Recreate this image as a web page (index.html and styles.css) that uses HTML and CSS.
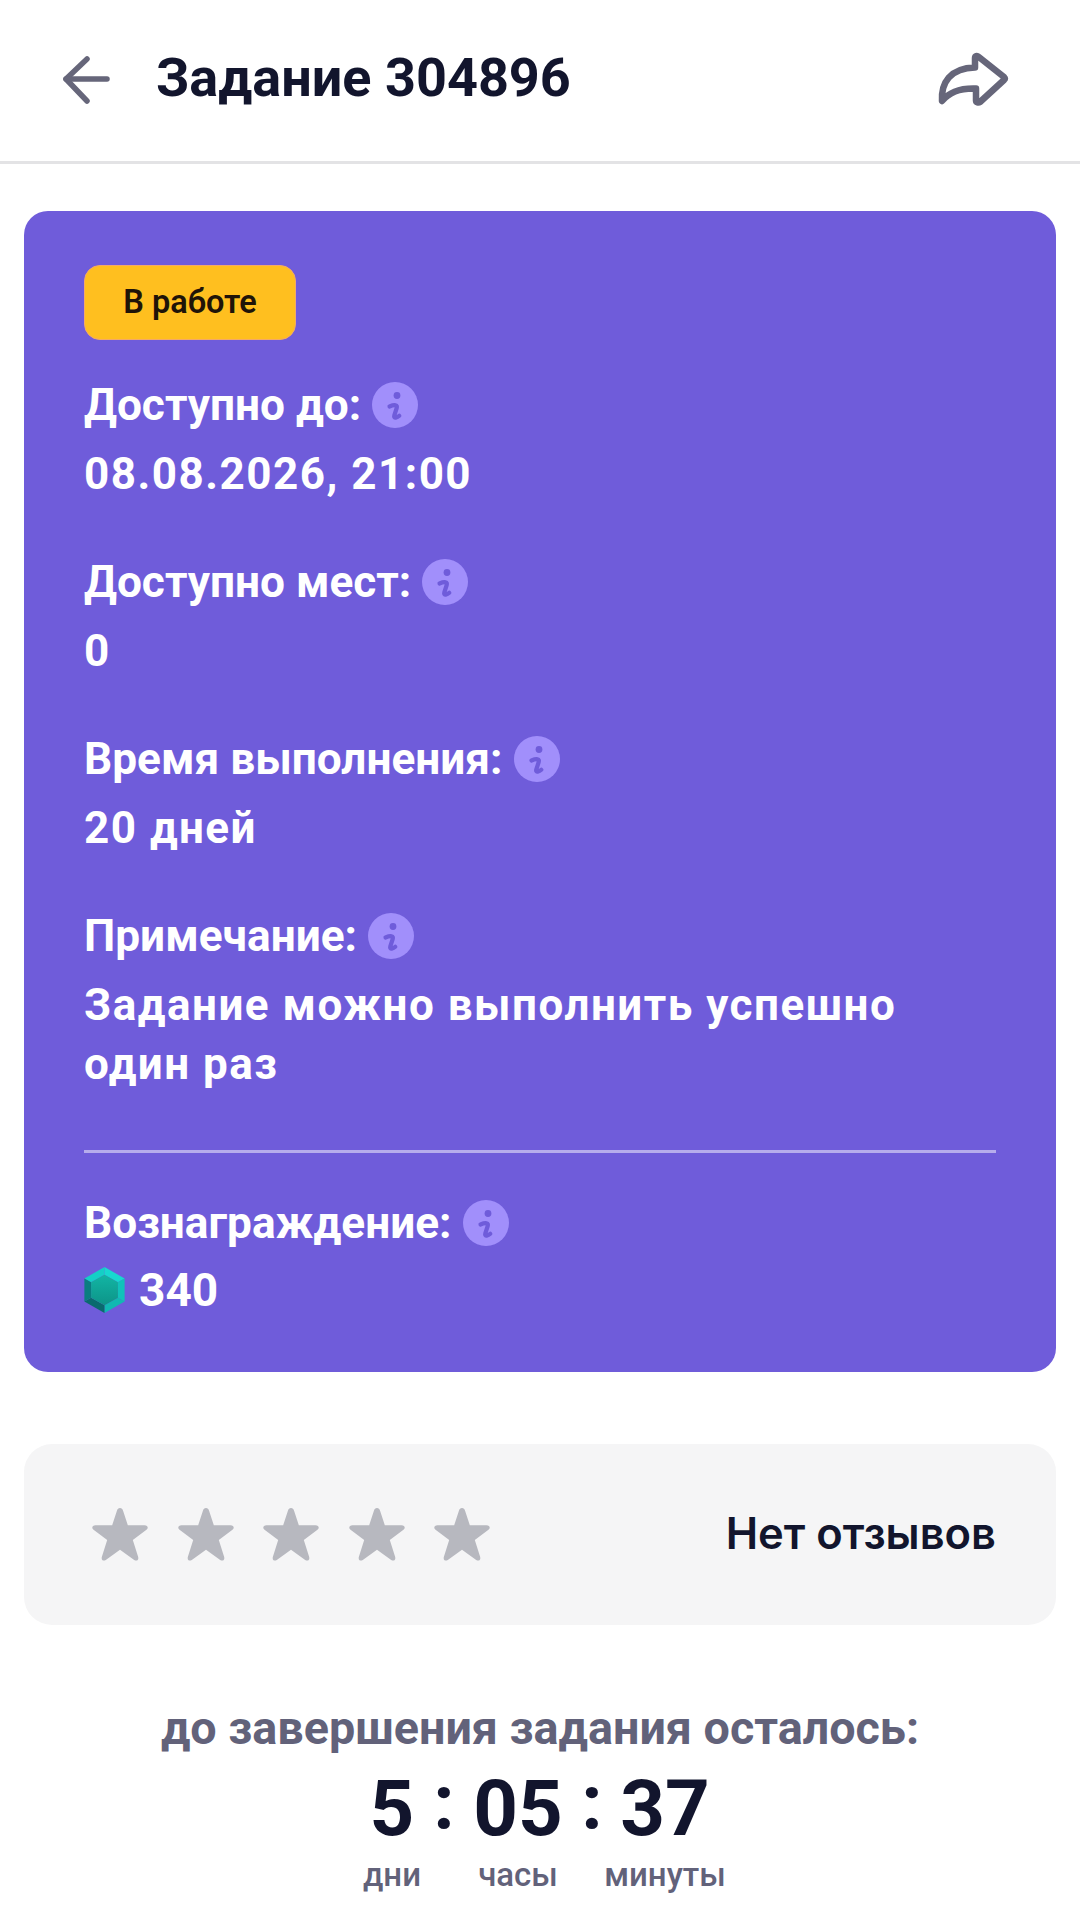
FILE: index.html
```html
<!DOCTYPE html>
<html lang="ru">
  <head>
    <meta charset="UTF-8" />
    <meta name="viewport" content="width=device-width, initial-scale=1.0" />
    <title>Задание 304896</title>
    <link rel="stylesheet" href="styles.css">
  </head>
  <body>
    <svg class="defs" width="0" height="0">
      <symbol id="info" viewBox="0 0 46 46">
        <circle cx="23" cy="23" r="23" fill="#a18ffb" />
        <circle cx="25" cy="13.500" r="3.400" fill="#6f5cda" />
        <path d="M17.500 24.500c2-.8 4.500-1.500 6-1.200 1.500.3 1.600 1.300 1.200 2.700l-2.400 7.500c-.5 1.600.3 2.300 1.500 2.100 1.200-.2 2.500-.9 3.500-1.800" fill="none" stroke="#6f5cda" stroke-width="4.200" stroke-linecap="round" stroke-linejoin="round" />
      </symbol>
      <symbol id="star" viewBox="3 3 52 51">
        <path d="M29 3c1.500 0 2.400 1 2.900 2.500l4.500 13.700h15.800c3 0 4 2.600 1.800 4.300l-12.900 9.700 5 15.900c.9 2.900-1.300 4.500-3.700 2.900L29 42.500 15.600 52c-2.400 1.600-4.600 0-3.700-2.900l5-15.900-12.900-9.700c-2.200-1.700-1.200-4.300 1.800-4.300h15.800l4.500-13.700C26.600 4 27.500 3 29 3z" fill="#b7b8bf" />
      </symbol>
      <linearGradient id="gem-core" x1="0" y1="0" x2="0" y2="1">
        <stop offset="0" stop-color="#12b5a4" />
        <stop offset="1" stop-color="#0d9488" />
      </linearGradient>
    </svg>

    <header class="topbar">
      <svg class="back-icon" viewBox="0 0 75 70" fill="none" stroke="#66667a" stroke-width="5.500" stroke-linecap="round" stroke-linejoin="round">
        <path d="M37 13 16 33l21 22" />
        <path d="M16 33h41" />
      </svg>
      <h1>Задание 304896</h1>
      <svg class="share-icon" viewBox="0 0 90 75" fill="none" stroke="#66667a" stroke-width="6.500" stroke-linecap="round" stroke-linejoin="round">
        <path d="M12 60C11 42 20 27 45 26.500V17c0-2 2-2.500 3.500-1.200L74 36c1 1 1 2 0 3L50 61c-1.500 1-4 .5-4-1.500V47.500C33 47 20 50 12 60z" />
      </svg>
    </header>

    <main class="page">
      <section class="task-card">
        <div class="badge">В работе</div>

        <div class="field">
          <div class="field-label">Доступно до: <svg class="info"><use href="#info" /></svg></div>
          <div class="field-value">08.08.2026, 21:00</div>
        </div>
        <div class="field">
          <div class="field-label">Доступно мест: <svg class="info"><use href="#info" /></svg></div>
          <div class="field-value">0</div>
        </div>
        <div class="field">
          <div class="field-label">Время выполнения: <svg class="info"><use href="#info" /></svg></div>
          <div class="field-value">20 дней</div>
        </div>
        <div class="field">
          <div class="field-label">Примечание: <svg class="info"><use href="#info" /></svg></div>
          <div class="field-value">Задание можно выполнить успешно<br>один раз</div>
        </div>

        <hr class="divider" />

        <div class="field-label">Вознаграждение: <svg class="info"><use href="#info" /></svg></div>
        <div class="reward">
          <svg class="gem" viewBox="0 0 42 48">
            <path d="M21 0V8L7 16 0 12z" fill="#14cfc6" />
            <path d="M21 0 42 12 35 16 21 8z" fill="#17d8cf" />
            <path d="M42 12V36L35 32V16z" fill="#10c2ba" />
            <path d="M42 36 21 48V40L35 32z" fill="#10b9b2" />
            <path d="M21 48 0 36 7 32 21 40z" fill="#0a6a6e" />
            <path d="M0 36V12L7 16V32z" fill="#0a7d80" />
            <path d="M21 8 35 16V32L21 40 7 32V16z" fill="url(#gem-core)" />
          </svg>
          <span>340</span>
        </div>
      </section>

      <section class="rating-card">
        <div class="stars">
          <svg class="star"><use href="#star" /></svg>
          <svg class="star"><use href="#star" /></svg>
          <svg class="star"><use href="#star" /></svg>
          <svg class="star"><use href="#star" /></svg>
          <svg class="star"><use href="#star" /></svg>
        </div>
        <span class="no-reviews">Нет отзывов</span>
      </section>

      <section class="timer">
        <div class="timer-title">до завершения задания осталось:</div>
        <div class="timer-row">
          <div class="timer-num">5</div>
          <div class="timer-sep">:</div>
          <div class="timer-num">05</div>
          <div class="timer-sep">:</div>
          <div class="timer-num">37</div>
          <div class="timer-unit">дни</div>
          <div></div>
          <div class="timer-unit">часы</div>
          <div></div>
          <div class="timer-unit">минуты</div>
        </div>
      </section>
    </main>
  </body>
</html>
```

FILE: styles.css
```css
html,
body {
  margin: 0;
  padding: 0;
}
body {
  width: 1080px;
  height: 1922px;
  overflow: hidden;
  background: #fff;
  font-family: Roboto, "Noto Sans", sans-serif;
}
.defs {
  display: block;
  height: 0;
}

.topbar {
  height: 161px;
  border-bottom: 3px solid #e3e3e5;
  display: flex;
  align-items: center;
  padding: 0 60px 0 50px;
}
.back-icon {
  width: 75px;
  height: 70px;
  margin-right: 31px;
}
.topbar h1 {
  margin: -6px 0 0;
  flex: 1;
  font-size: 54px;
  font-weight: 700;
  color: #12152d;
}
.share-icon {
  width: 90px;
  height: 75px;
  margin-top: -5px;
}

.page {
  padding: 47px 24px 0;
}

.task-card {
  background: #6f5cda;
  border-radius: 24px;
  padding: 54px 60px 53px;
  color: #fff;
}
.badge {
  width: 212px;
  height: 75px;
  box-sizing: border-box;
  background: #ffbf1f;
  border: 1px solid #f3a968;
  border-radius: 16px;
  display: flex;
  align-items: center;
  justify-content: center;
  padding-bottom: 2px;
  font-size: 32.500px;
  font-weight: 600;
  color: #1f1408;
  margin-bottom: 36px;
}
.field {
  margin-bottom: 49px;
}
.field-label {
  display: flex;
  align-items: center;
  gap: 11px;
  height: 58px;
  font-size: 44.200px;
  font-weight: 700;
}
.field-value {
  margin-top: 11px;
  font-size: 44px;
  line-height: 59px;
  font-weight: 700;
  letter-spacing: 1.500px;
}
.info {
  width: 46px;
  height: 46px;
  flex: none;
}
.divider {
  border: 0;
  height: 3px;
  background: #b6acec;
  margin: 56px 0 41px;
}
.reward {
  display: flex;
  align-items: center;
  gap: 14px;
  margin-top: 9px;
  font-size: 46px;
  font-weight: 700;
  line-height: 58px;
}
.gem {
  width: 41px;
  height: 46px;
}

.rating-card {
  margin-top: 72px;
  height: 181px;
  background: #f5f5f6;
  border-radius: 28px;
  display: flex;
  align-items: center;
  justify-content: space-between;
  padding: 0 60px 0 68px;
}
.stars {
  display: flex;
  gap: 29.500px;
}
.star {
  width: 56px;
  height: 54px;
}
.no-reviews {
  font-family: Inter, Roboto, sans-serif;
  font-size: 43.500px;
  font-weight: 600;
  margin-bottom: 4px;
  color: #12152d;
}

.timer {
  margin-top: 76px;
  text-align: center;
}
.timer-title {
  font-size: 46.700px;
  font-weight: 700;
  color: #62627a;
}
.timer-row {
  display: grid;
  grid-template-columns: 74px 30px 118px 30px 116px;
  justify-content: center;
  justify-items: center;
  margin-top: 9px;
  margin-left: -2px;
}
.timer-num {
  font-size: 78px;
  font-weight: 700;
  line-height: 90px;
  color: #12152d;
}
.timer-sep {
  font-size: 76px;
  font-weight: 700;
  line-height: 90px;
  margin-top: -7px;
  color: #12152d;
}
.timer-unit {
  font-size: 33px;
  font-weight: 500;
  color: #62627a;
  white-space: nowrap;
  margin-top: 1px;
}
```
